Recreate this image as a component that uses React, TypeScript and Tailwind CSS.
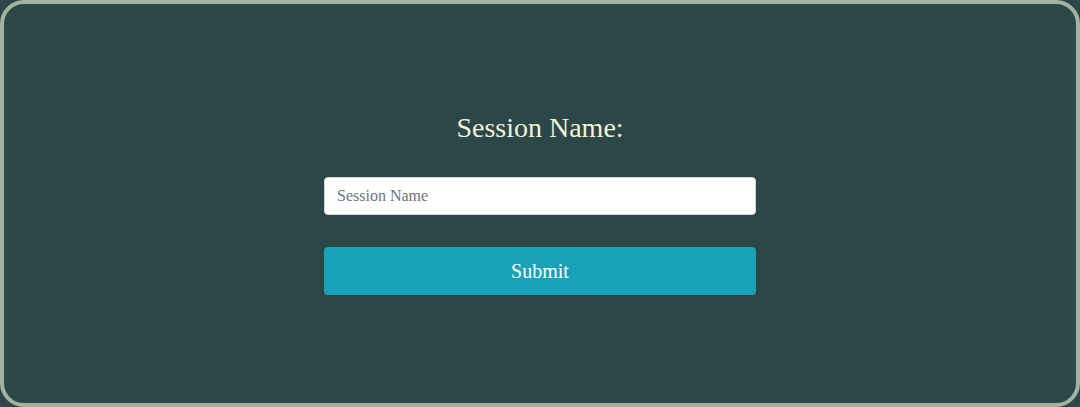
import React from "react";

const App = () => {
  return (
    <div
      className="h-screen w-full bg-[#2c4747]"
      style={{ fontFamily: '"Liberation Serif", "Times New Roman", serif' }}
    >
      <div className="h-full w-full rounded-[24px] border-4 border-[#a4b2a0] flex flex-col items-center justify-center">
        <h2 className="text-[28px] leading-[32px] text-[#f3f3dc] mb-[33px]">Session Name:</h2>
        <form className="w-[432px] flex flex-col gap-[32px]" onSubmit={(e) => e.preventDefault()}>
          <input
            type="text"
            placeholder="Session Name"
            className="h-[38px] w-full rounded-[4px] border border-[#ced4da] bg-white px-3 text-base text-[#495057] placeholder:text-[#6c757d] outline-none"
          />
          <button
            type="submit"
            className="h-[48px] w-full rounded-[4px] bg-[#17a2b8] text-[20px] text-white"
          >
            Submit
          </button>
        </form>
      </div>
    </div>
  );
};

export default App;
